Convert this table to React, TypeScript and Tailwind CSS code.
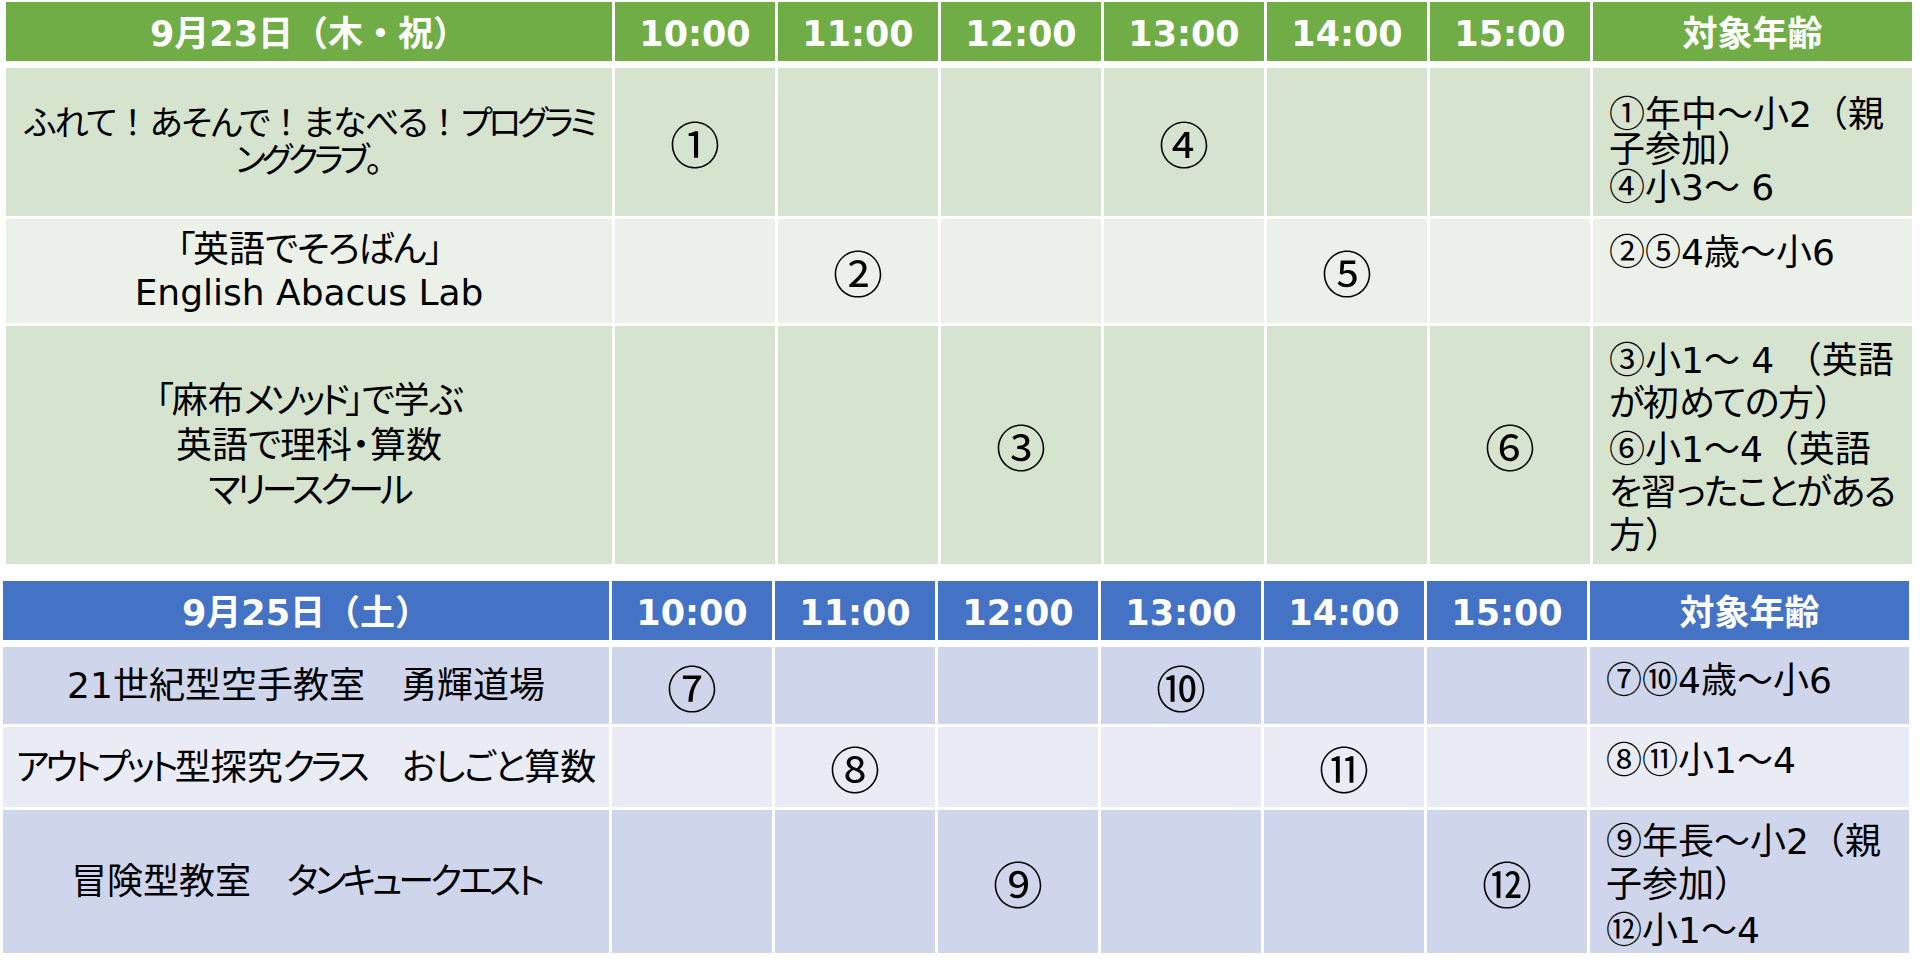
import React from "react";

type Row = {
  name: string[];
  nameCls: string;
  h: string;
  band: boolean;
  slots: Record<number, string>;
  age: string[];
  ageCls: string;
};

type Theme = {
  head: string;
  band: string;
  light: string;
};

const green: Theme = { head: "bg-[#70ad47]", band: "bg-[#d6e3cf]", light: "bg-[#ebf1e9]" };
const blue: Theme = { head: "bg-[#4472c4]", band: "bg-[#cfd5ea]", light: "bg-[#e9ebf5]" };

const times = ["10:00", "11:00", "12:00", "13:00", "14:00", "15:00"];

const day1: Row[] = [
  {
    name: ["ふれて！あそんで！まなべる！プログラミ", "ングクラブ。"],
    nameCls: "text-[34px] leading-[37px]",
    h: "h-[148px]",
    band: true,
    slots: { 0: "①", 3: "④" },
    age: ["①年中～小2（親", "子参加）", "④小3～ 6"],
    ageCls: "pt-[26px] leading-[35px]",
  },
  {
    name: ["「英語でそろばん」", "English Abacus Lab"],
    nameCls: "leading-[43px]",
    h: "h-[104px]",
    band: false,
    slots: { 1: "②", 4: "⑤" },
    age: ["②⑤4歳～小6"],
    ageCls: "pt-[9px] leading-[43px]",
  },
  {
    name: ["「麻布メソッド」で学ぶ", "英語で理科・算数", "マリースクール"],
    nameCls: "leading-[45px]",
    h: "h-[238px]",
    band: true,
    slots: { 2: "③", 5: "⑥" },
    age: ["③小1～ 4 （英語", "が初めての方）", "⑥小1～4（英語", "を習ったことがある", "方）"],
    ageCls: "pt-[10px] leading-[43px]",
  },
];

const day2: Row[] = [
  {
    name: ["21世紀型空手教室　勇輝道場"],
    nameCls: "leading-[43px]",
    h: "h-[77px]",
    band: true,
    slots: { 0: "⑦", 3: "⑩" },
    age: ["⑦⑩4歳～小6"],
    ageCls: "pt-[9px] leading-[43px]",
  },
  {
    name: ["アウトプット型探究クラス　おしごと算数"],
    nameCls: "leading-[43px]",
    h: "h-[80px]",
    band: false,
    slots: { 1: "⑧", 4: "⑪" },
    age: ["⑧⑪小1～4"],
    ageCls: "pt-[9px] leading-[43px]",
  },
  {
    name: ["冒険型教室　タンキュークエスト"],
    nameCls: "leading-[43px]",
    h: "h-[143px]",
    band: true,
    slots: { 2: "⑨", 5: "⑫" },
    age: ["⑨年長～小2（親", "子参加）", "⑫小1～4"],
    ageCls: "pt-[7px] leading-[43px]",
  },
];

const cols = "grid grid-cols-[606px_repeat(6,160px)_319px] gap-x-[3px]";

// Meiryo-like widths: tighten kana, keep full-width ！（） and circled digits from the CJK font
const splitRe = /([\u30A0-\u30FA\u30FC-\u30FF]+|[\u3040-\u309F]+|[「」]+|[！（）]+|[\u2460-\u2473]+)/;

function Jp({ s }: { s: string }) {
  const parts = s.split(splitRe);
  return (
    <>
      {parts.map((p, i) => {
        if (!p) return null;
        if (/^[\u30A0-\u30FF]/.test(p)) return <span key={i} className="tracking-[-4px]">{p}</span>;
        if (/^[\u3040-\u309F]/.test(p)) return <span key={i} className="tracking-[-1.5px]">{p}</span>;
        if (/^[「」]/.test(p)) return <span key={i} className="tracking-[-2px]">{p}</span>;
        if (/^[！（）]/.test(p)) return <span key={i} className="[font-feature-settings:normal]">{p}</span>;
        if (/^[\u2460-\u2473]/.test(p))
          return (
            <span key={i} className="[font-family:'Noto_Sans_CJK_JP',sans-serif]">
              {p}
            </span>
          );
        return <React.Fragment key={i}>{p}</React.Fragment>;
      })}
    </>
  );
}

function Table({ title, theme, rows, cls }: { title: string; theme: Theme; rows: Row[]; cls: string }) {
  return (
    <div className={`flex flex-col gap-[3px] ${cls}`}>
      {/* header */}
      <div className={`${cols} h-[59px] mb-[4px] text-white font-bold text-[35px] [font-feature-settings:normal]`}>
        <div className={`${theme.head} flex items-center justify-center pt-[5px]`}>{title}</div>
        {times.map((t) => (
          <div key={t} className={`${theme.head} flex items-center justify-center pt-[5px]`}>
            {t}
          </div>
        ))}
        <div className={`${theme.head} flex items-center justify-center pt-[5px]`}>対象年齢</div>
      </div>

      {rows.map((r, ri) => {
        const bg = r.band ? theme.band : theme.light;
        return (
          <div key={ri} className={`${cols} ${r.h} text-black text-[36px]`}>
            <div className={`${bg} flex flex-col items-center justify-center text-center ${r.nameCls}`}>
              {r.name.map((l) => (
                <div key={l} className="whitespace-nowrap">
                  <Jp s={l} />
                </div>
              ))}
            </div>
            {times.map((t, i) => (
              <div
                key={t}
                className={`${bg} flex items-center justify-center text-[50px] leading-none [font-family:'Noto_Sans_CJK_JP',sans-serif]`}
              >
                {r.slots[i] ?? ""}
              </div>
            ))}
            <div className={`${bg} pl-[16px] ${r.ageCls}`}>
              {r.age.map((l, i) => (
                <div key={i} className="whitespace-pre">
                  <Jp s={l} />
                </div>
              ))}
            </div>
          </div>
        );
      })}
    </div>
  );
}

export default function App() {
  return (
    <div className="min-h-screen bg-white pt-[2px] [font-family:'DejaVu_Sans','Noto_Sans_CJK_JP',sans-serif] [font-feature-settings:'palt']">
      <Table title="9月23日（木・祝）" theme={green} rows={day1} cls="ml-[6px]" />
      <div className="mt-[17px]">
        <Table title="9月25日（土）" theme={blue} rows={day2} cls="ml-[3px]" />
      </div>
    </div>
  );
}
